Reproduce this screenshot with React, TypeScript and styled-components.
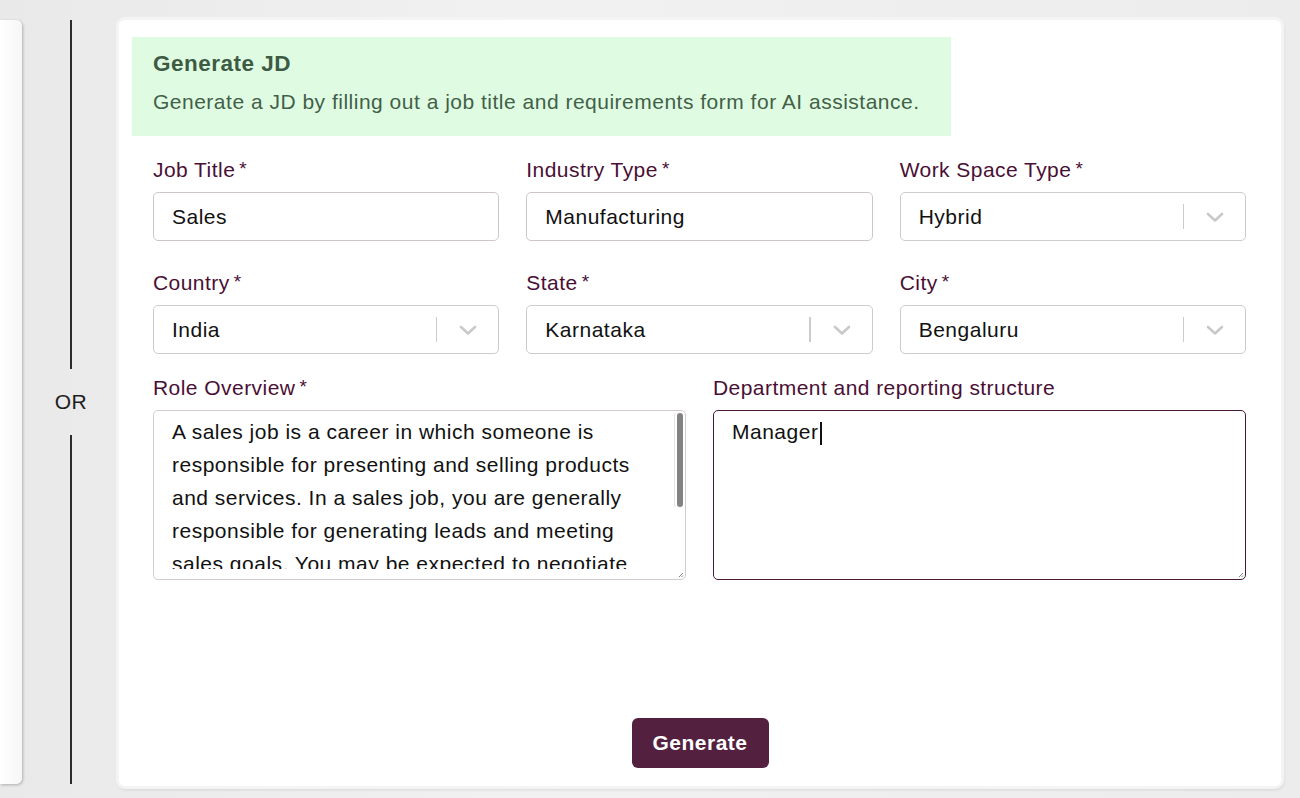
import React from "react";
import styled, { createGlobalStyle } from "styled-components";

const GlobalStyle = createGlobalStyle`
    html, body {
        margin: 0;
        padding: 0;
        background: #ececec;
        font-family: "Liberation Sans", Arial, sans-serif;
    }
`;

const Page = styled.div`
    display: flex;
    height: 798px;
    padding: 20px 19px 12px 0;
    box-sizing: border-box;
    background: linear-gradient(90deg, #e9e9e9 0%, #f1f1f1 40%, #ececec 100%);
`;

const SideCard = styled.div`
    width: 22px;
    height: 764px;
    background: linear-gradient(90deg, #ffffff 0%, #f6f6f6 100%);
    border-radius: 0 6px 6px 0;
    box-shadow: 1px 1px 3px rgba(0, 0, 0, 0.25);
`;

const Divider = styled.div`
    width: 97px;
    height: 764px;
    display: flex;
    flex-direction: column;
    align-items: center;
    padding-left: 1px;
    box-sizing: border-box;
`;

const DividerLine = styled.div`
    flex: 1;
    width: 1.5px;
    background: #2b2b2b;
`;

const OrText = styled.div`
    font-size: 21px;
    letter-spacing: 0.5px;
    color: #1e1e1e;
    padding: 21px 0;
`;

const MainCard = styled.div`
    flex: 1;
    height: 766px;
    background: #ffffff;
    border-radius: 6px;
    box-shadow: 0 0 0 3px #f4f4f4, 1px 2px 4px rgba(0, 0, 0, 0.25);
    padding: 17px 35px 18px 13px;
    box-sizing: border-box;
    display: flex;
    flex-direction: column;
`;

const Banner = styled.div`
    width: 819px;
    height: 99px;
    background: #dffce3;
    padding: 13px 21px 0;
    box-sizing: border-box;
`;

const BannerTitle = styled.div`
    font-size: 22.5px;
    letter-spacing: 0.5px;
    font-weight: bold;
    color: #3d5a43;
    line-height: 28px;
`;

const BannerText = styled.div`
    font-size: 21px;
    letter-spacing: 0.5px;
    color: #435f48;
    line-height: 24px;
    margin-top: 12px;
`;

const FormGrid = styled.div<{ $cols: number; $top: number }>`
    display: grid;
    grid-template-columns: repeat(${(p) => p.$cols}, 1fr);
    column-gap: 27px;
    margin: ${(p) => p.$top}px 0 0 21px;
`;

const Field = styled.div`
    display: flex;
    flex-direction: column;
`;

const Label = styled.label`
    font-size: 21px;
    letter-spacing: 0.45px;
    line-height: 24px;
    color: #4a0f35;
    margin-bottom: 10px;
`;

const Star = styled.span`
    font-size: 19px;
    vertical-align: top;
    margin-left: 4px;
    line-height: 22px;
`;

const TextInput = styled.input`
    height: 49px;
    box-sizing: border-box;
    border: 1.5px solid #cfc6cb;
    border-radius: 5px;
    padding: 0 18px;
    font-family: inherit;
    font-size: 21px;
    letter-spacing: 0.5px;
    color: #111;
    outline: none;
`;

const SelectBox = styled.div`
    height: 49px;
    box-sizing: border-box;
    border: 1.5px solid #cccccc;
    border-radius: 5px;
    padding: 0 18px 0 18px;
    display: flex;
    align-items: center;
    font-size: 21px;
    letter-spacing: 0.5px;
    color: #111;
`;

const SelectValue = styled.span`
    flex: 1;
`;

const Separator = styled.span`
    width: 1.5px;
    height: 25px;
    background: #cccccc;
    margin-right: 19px;
`;

const Chevron = styled.svg`
    width: 24px;
    height: 24px;
    color: #c9c9c9;
`;

const AreaBox = styled.div<{ $active?: boolean }>`
    position: relative;
    height: 170px;
    box-sizing: border-box;
    border: ${(p) => (p.$active ? "1.5px solid #4a1838" : "1.5px solid #d6cad1")};
    border-radius: 5px;
    padding-bottom: 10px;
    display: flex;
    flex-direction: column;
    overflow: hidden;
`;

const TextArea = styled.textarea`
    flex: 1;
    border: none;
    padding: 4px 24px 0 18px;
    font-family: inherit;
    font-size: 21px;
    letter-spacing: 0.5px;
    line-height: 33px;
    color: #111;
    background: transparent;
    outline: none;
    resize: none;
    overflow: hidden;
`;

const ScrollThumb = styled.div`
    position: absolute;
    top: 2px;
    right: 2px;
    width: 6px;
    height: 94px;
    border-radius: 3px;
    background: #838383;
    box-shadow: -2px 0 0 #ffffff, -3px 0 0 #e6e6e6;
`;

const Grip = styled.svg`
    position: absolute;
    right: 1px;
    bottom: 1px;
    width: 7px;
    height: 7px;
    color: #777;
`;

const Caret = styled.span`
    position: absolute;
    top: 11px;
    left: 106px;
    width: 1.5px;
    height: 23px;
    background: #111;
`;

const Footer = styled.div`
    margin-top: auto;
    display: flex;
    justify-content: center;
    padding-left: 22px;
`;

const Button = styled.button`
    width: 137px;
    height: 50px;
    border: none;
    border-radius: 6px;
    background: #53213f;
    color: #ffffff;
    font-family: inherit;
    font-size: 21px;
    letter-spacing: 0.5px;
    font-weight: bold;
    cursor: pointer;
`;

function Select(props: { value: string }) {
    return (
        <SelectBox>
            <SelectValue>{props.value}</SelectValue>
            <Separator />
            <Chevron viewBox="0 0 24 24">
                <path d="M5 9 L12 15.5 L19 9" fill="none" stroke="currentColor" strokeWidth="2.6" strokeLinecap="round" strokeLinejoin="round" />
            </Chevron>
        </SelectBox>
    );
}

function ResizeGrip() {
    return (
        <Grip viewBox="0 0 7 7">
            <path d="M6 2 L2 6 M6 4.5 L4.5 6" stroke="currentColor" strokeWidth="0.9" />
        </Grip>
    );
}

function FieldLabel(props: { text: string; required?: boolean }) {
    return (
        <Label>
            {props.text}
            {props.required && <Star>*</Star>}
        </Label>
    );
}

const overview =
    "A sales job is a career in which someone is responsible for presenting and selling products and services. In a sales job, you are generally responsible for generating leads and meeting sales goals. You may be expected to negotiate prices and close deals with potential customers.";

export default function App() {
    return (
        <>
            <GlobalStyle />
            <Page>
                <SideCard />
                <Divider>
                    <DividerLine />
                    <OrText>OR</OrText>
                    <DividerLine />
                </Divider>
                <MainCard>
                    <Banner>
                        <BannerTitle>Generate JD</BannerTitle>
                        <BannerText>Generate a JD by filling out a job title and requirements form for AI assistance.</BannerText>
                    </Banner>

                    <FormGrid $cols={3} $top={22}>
                        <Field>
                            <FieldLabel text="Job Title" required />
                            <TextInput defaultValue="Sales" />
                        </Field>
                        <Field>
                            <FieldLabel text="Industry Type" required />
                            <TextInput defaultValue="Manufacturing" />
                        </Field>
                        <Field>
                            <FieldLabel text="Work Space Type" required />
                            <Select value="Hybrid" />
                        </Field>
                    </FormGrid>

                    <FormGrid $cols={3} $top={30}>
                        <Field>
                            <FieldLabel text="Country" required />
                            <Select value="India" />
                        </Field>
                        <Field>
                            <FieldLabel text="State" required />
                            <Select value="Karnataka" />
                        </Field>
                        <Field>
                            <FieldLabel text="City" required />
                            <Select value="Bengaluru" />
                        </Field>
                    </FormGrid>

                    <FormGrid $cols={2} $top={22}>
                        <Field>
                            <FieldLabel text="Role Overview" required />
                            <AreaBox>
                                <TextArea defaultValue={overview} />
                                <ScrollThumb />
                                <ResizeGrip />
                            </AreaBox>
                        </Field>
                        <Field>
                            <FieldLabel text="Department and reporting structure" />
                            <AreaBox $active>
                                <TextArea defaultValue="Manager" />
                                <Caret />
                                <ResizeGrip />
                            </AreaBox>
                        </Field>
                    </FormGrid>

                    <Footer>
                        <Button>Generate</Button>
                    </Footer>
                </MainCard>
            </Page>
        </>
    );
}
